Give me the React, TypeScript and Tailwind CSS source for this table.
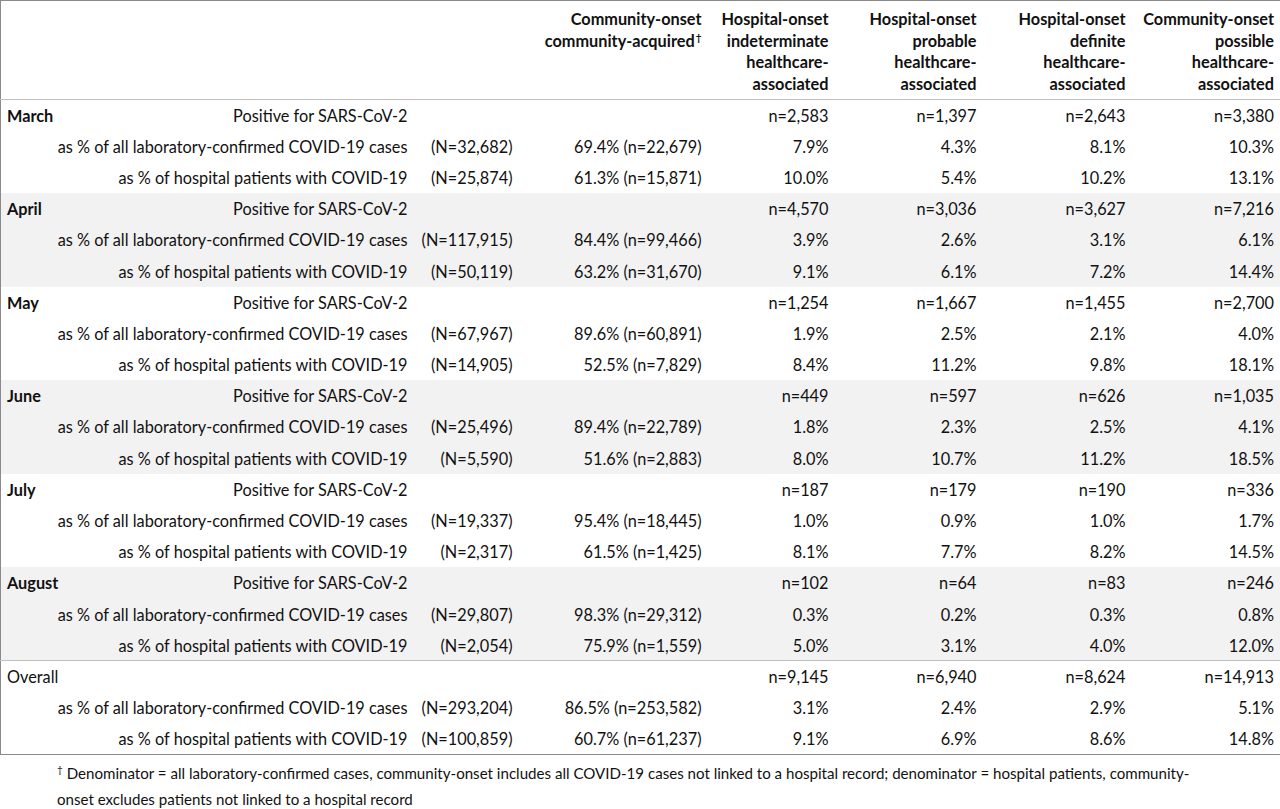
import React from "react";

type Row = { label: string; N?: string; ca?: string; v: string[] };
type Block = { month: string; bold: boolean; shade: boolean; rows: Row[] };

const blocks: Block[] = [
  { month: "March", bold: true, shade: false, rows: [
    { label: "Positive for SARS-CoV-2", v: ["n=2,583", "n=1,397", "n=2,643", "n=3,380"] },
    { label: "as % of all laboratory-confirmed COVID-19 cases", N: "(N=32,682)", ca: "69.4% (n=22,679)", v: ["7.9%", "4.3%", "8.1%", "10.3%"] },
    { label: "as % of hospital patients with COVID-19", N: "(N=25,874)", ca: "61.3% (n=15,871)", v: ["10.0%", "5.4%", "10.2%", "13.1%"] },
  ]},
  { month: "April", bold: true, shade: true, rows: [
    { label: "Positive for SARS-CoV-2", v: ["n=4,570", "n=3,036", "n=3,627", "n=7,216"] },
    { label: "as % of all laboratory-confirmed COVID-19 cases", N: "(N=117,915)", ca: "84.4% (n=99,466)", v: ["3.9%", "2.6%", "3.1%", "6.1%"] },
    { label: "as % of hospital patients with COVID-19", N: "(N=50,119)", ca: "63.2% (n=31,670)", v: ["9.1%", "6.1%", "7.2%", "14.4%"] },
  ]},
  { month: "May", bold: true, shade: false, rows: [
    { label: "Positive for SARS-CoV-2", v: ["n=1,254", "n=1,667", "n=1,455", "n=2,700"] },
    { label: "as % of all laboratory-confirmed COVID-19 cases", N: "(N=67,967)", ca: "89.6% (n=60,891)", v: ["1.9%", "2.5%", "2.1%", "4.0%"] },
    { label: "as % of hospital patients with COVID-19", N: "(N=14,905)", ca: "52.5% (n=7,829)", v: ["8.4%", "11.2%", "9.8%", "18.1%"] },
  ]},
  { month: "June", bold: true, shade: true, rows: [
    { label: "Positive for SARS-CoV-2", v: ["n=449", "n=597", "n=626", "n=1,035"] },
    { label: "as % of all laboratory-confirmed COVID-19 cases", N: "(N=25,496)", ca: "89.4% (n=22,789)", v: ["1.8%", "2.3%", "2.5%", "4.1%"] },
    { label: "as % of hospital patients with COVID-19", N: "(N=5,590)", ca: "51.6% (n=2,883)", v: ["8.0%", "10.7%", "11.2%", "18.5%"] },
  ]},
  { month: "July", bold: true, shade: false, rows: [
    { label: "Positive for SARS-CoV-2", v: ["n=187", "n=179", "n=190", "n=336"] },
    { label: "as % of all laboratory-confirmed COVID-19 cases", N: "(N=19,337)", ca: "95.4% (n=18,445)", v: ["1.0%", "0.9%", "1.0%", "1.7%"] },
    { label: "as % of hospital patients with COVID-19", N: "(N=2,317)", ca: "61.5% (n=1,425)", v: ["8.1%", "7.7%", "8.2%", "14.5%"] },
  ]},
  { month: "August", bold: true, shade: true, rows: [
    { label: "Positive for SARS-CoV-2", v: ["n=102", "n=64", "n=83", "n=246"] },
    { label: "as % of all laboratory-confirmed COVID-19 cases", N: "(N=29,807)", ca: "98.3% (n=29,312)", v: ["0.3%", "0.2%", "0.3%", "0.8%"] },
    { label: "as % of hospital patients with COVID-19", N: "(N=2,054)", ca: "75.9% (n=1,559)", v: ["5.0%", "3.1%", "4.0%", "12.0%"] },
  ]},
];

const overall: Row[] = [
  { label: "", v: ["n=9,145", "n=6,940", "n=8,624", "n=14,913"] },
  { label: "as % of all laboratory-confirmed COVID-19 cases", N: "(N=293,204)", ca: "86.5% (n=253,582)", v: ["3.1%", "2.4%", "2.9%", "5.1%"] },
  { label: "as % of hospital patients with COVID-19", N: "(N=100,859)", ca: "60.7% (n=61,237)", v: ["9.1%", "6.9%", "8.6%", "14.8%"] },
];

const headers = [
  ["Hospital-onset", "indeterminate", "healthcare-", "associated"],
  ["Hospital-onset", "probable", "healthcare-", "associated"],
  ["Hospital-onset", "definite", "healthcare-", "associated"],
  ["Community-onset", "possible", "healthcare-", "associated"],
];

function DataRow({ r, first, month, bold, shade, topLine }: { r: Row; first: boolean; month?: string; bold?: boolean; shade: boolean; topLine?: boolean }) {
  const bg = shade ? "bg-[#f2f2f2]" : "bg-white";
  const tl = topLine ? "border-t border-[#bfbfbf]" : "";
  return (
    <tr className={`${bg} h-[31.2px]`}>
      <td className={`pl-[6px] pr-[6px] whitespace-nowrap ${tl}`}>
        <div className="flex justify-between">
          <span className={bold ? "font-bold" : ""}>{first ? month : ""}</span>
          <span>{r.label}</span>
        </div>
      </td>
      <td className={`pr-[6px] text-right whitespace-nowrap ${tl}`}>{r.N ?? ""}</td>
      <td className={`pr-[6px] text-right whitespace-nowrap ${tl}`}>{r.ca ?? ""}</td>
      {r.v.map((x, i) => (
        <td key={i} className={`pr-[6px] text-right whitespace-nowrap ${tl}`}>{x}</td>
      ))}
    </tr>
  );
}

export default function App() {
  return (
    <div className="w-[1280px] h-[809px] bg-white text-[#111] overflow-hidden" style={{ fontFamily: "Lato, 'Open Sans', sans-serif" }}>
      <table className="table-fixed border-collapse border border-[#8a8a8a] w-[1280px] text-[16.3px] leading-[19px]">
        <colgroup>
          <col className="w-[413px]" />
          <col className="w-[105px]" />
          <col className="w-[189px]" />
          <col className="w-[127px]" />
          <col className="w-[148px]" />
          <col className="w-[149px]" />
          <col className="w-[149px]" />
        </colgroup>
        <thead>
          <tr className="h-[99px] border-b border-[#bfbfbf]">
            <th />
            <th />
            <th className="pr-[6px] text-right align-top pt-[7px] font-bold leading-[21.5px] whitespace-nowrap">
              Community-onset<br />community-acquired<span className="relative -top-[6px] text-[10px] leading-none ml-[1px]">†</span>
            </th>
            {headers.map((h, i) => (
              <th key={i} className="pr-[6px] text-right align-top pt-[7px] font-bold leading-[21.5px] whitespace-nowrap">
                {h.map((l, j) => (
                  <React.Fragment key={j}>{l}{j < h.length - 1 && <br />}</React.Fragment>
                ))}
              </th>
            ))}
          </tr>
        </thead>
        <tbody>
          {blocks.map((b) =>
            b.rows.map((r, i) => (
              <DataRow key={b.month + i} r={r} first={i === 0} month={b.month} bold={b.bold} shade={b.shade} />
            ))
          )}
          {overall.map((r, i) => (
            <DataRow key={"o" + i} r={r} first={i === 0} month="Overall" bold={false} shade={false} topLine={i === 0} />
          ))}
        </tbody>
      </table>
      <div className="pl-[57px] pr-[20px] pt-[5px] text-[15.1px] leading-[26px] whitespace-nowrap">
        <p><span className="relative -top-[6px] text-[10px] leading-none">†</span> Denominator = all laboratory-confirmed cases, community-onset includes all COVID-19 cases not linked to a hospital record; denominator = hospital patients, community-</p>
        <p>onset excludes patients not linked to a hospital record</p>
      </div>
    </div>
  );
}
